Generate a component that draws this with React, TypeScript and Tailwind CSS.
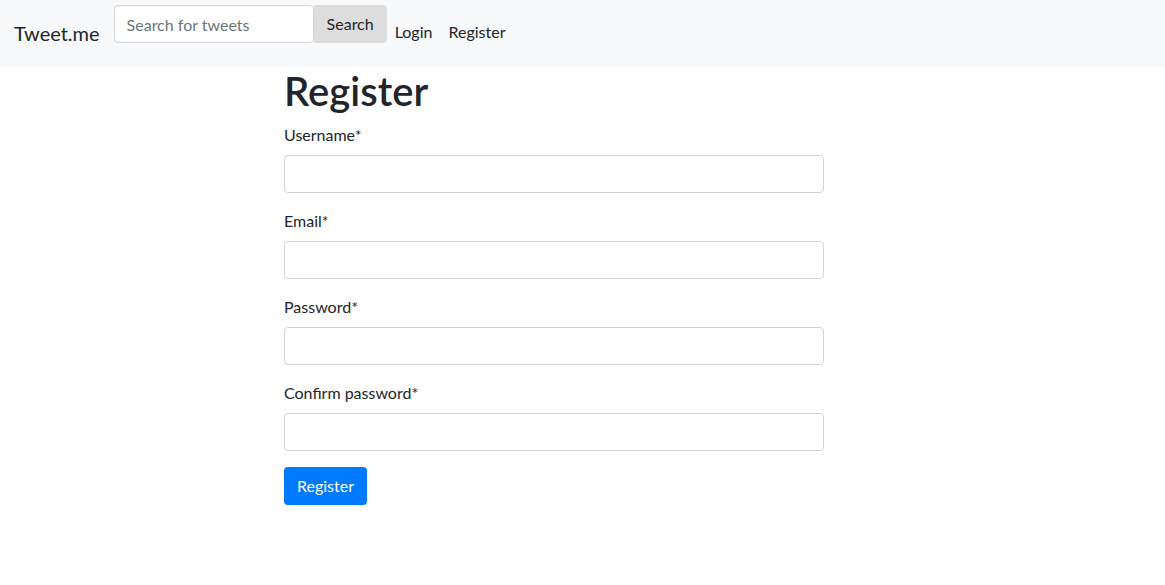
import React from 'react';

const fields = [
  { label: 'Username*', type: 'text' },
  { label: 'Email*', type: 'email' },
  { label: 'Password*', type: 'password' },
  { label: 'Confirm password*', type: 'password' },
];

const App: React.FC = () => {
  return (
    <div className="min-h-screen bg-white text-[#212529] font-['Lato',sans-serif]">
      <nav className="h-[67px] bg-[#f8f9fa] flex items-start pl-[14px]">
        <a href="#" className="mt-[19px] text-[20px] leading-[28px] text-[#212529] mr-[14px]">
          Tweet.me
        </a>
        <form className="flex mt-[5px]" onSubmit={(e) => e.preventDefault()}>
          <input
            type="text"
            placeholder="Search for tweets"
            className="w-[200px] h-[38px] px-3 text-[16px] border border-[#ced4da] rounded-[4px] bg-white placeholder:text-[#6c757d] outline-none"
          />
          <button type="submit" className="h-[38px] px-[13px] text-[16px] bg-[#dddddd] rounded-r-[4px] text-[#212529]">
            Search
          </button>
        </form>
        <ul className="flex mt-[20px]">
          <li>
            <a href="#" className="px-2 text-[16px] leading-[24px] text-[#212529]">Login</a>
          </li>
          <li>
            <a href="#" className="px-2 text-[16px] leading-[24px] text-[#212529]">Register</a>
          </li>
        </ul>
      </nav>
      <main className="ml-[284px] w-[540px]">
        <h1 className="text-[40px] leading-[48px] font-semibold mb-2">Register</h1>
        <form onSubmit={(e) => e.preventDefault()}>
          {fields.map((f) => (
            <div key={f.label} className="mb-4">
              <label className="block text-[16px] leading-[24px] mb-2">{f.label}</label>
              <input
                type={f.type}
                className="block w-full h-[38px] px-3 border border-[#ced4da] rounded-[4px] outline-none"
              />
            </div>
          ))}
          <button type="submit" className="h-[38px] px-[13px] bg-[#007bff] text-white text-[16px] rounded-[4px]">
            Register
          </button>
        </form>
      </main>
    </div>
  );
};

export default App;
